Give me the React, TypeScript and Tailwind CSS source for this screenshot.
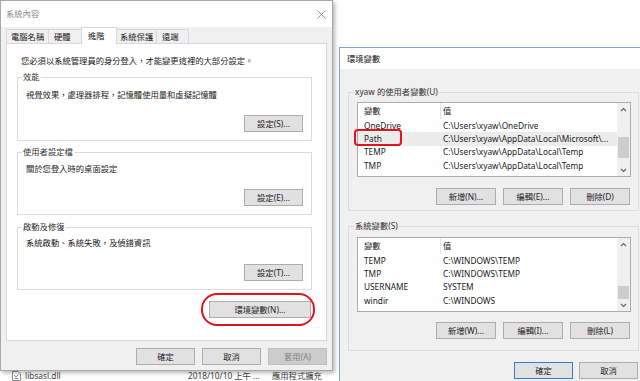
import React from "react";

function Btn({
  w,
  children,
  className = "",
}: {
  w: string;
  children: React.ReactNode;
  className?: string;
}) {
  return (
    <div
      className={`${w} h-[17px] shrink-0 flex items-center justify-center border border-[#adadad] bg-[#e1e1e1] text-[#222] ${className}`}
    >
      {children}
    </div>
  );
}

function ChevronUp() {
  return (
    <svg width="7" height="5" viewBox="0 0 7 5">
      <path d="M1 4 L3.5 1.5 L6 4" fill="none" stroke="#606060" strokeWidth="1.1" />
    </svg>
  );
}
function ChevronDown() {
  return (
    <svg width="7" height="5" viewBox="0 0 7 5">
      <path d="M1 1 L3.5 3.5 L6 1" fill="none" stroke="#606060" strokeWidth="1.1" />
    </svg>
  );
}

function SettingGroup({
  title,
  desc,
  btn,
  descMt,
  btnMt,
}: {
  title: string;
  desc: string;
  btn: string;
  descMt: string;
  btnMt: string;
}) {
  return (
    <fieldset className="border border-[#dcdcdc] flex flex-col pb-[8px]">
      <legend className="ml-[4px] px-[1px] leading-[12px] text-[#333]">{title}</legend>
      <div className={`ml-[8px] ${descMt} leading-[12px] text-[#222]`}>{desc}</div>
      <div className={`${btnMt} mr-[8px] self-end`}>
        <Btn w="w-[59px]">{btn}</Btn>
      </div>
    </fieldset>
  );
}

type Row = { name: string; value: string; hl?: boolean };

function VarList({
  rows,
  thumbTop,
  thumbH,
}: {
  rows: Row[];
  thumbTop: string;
  thumbH: string;
}) {
  return (
    <div className="w-[274px] h-[75px] border border-[#abadb3] bg-white flex overflow-hidden">
      <div className="w-[259px] flex flex-col">
        <div className="h-[16px] shrink-0 flex items-stretch">
          <div className="w-[83px] pl-[6px] flex items-center border-r border-[#e5e5e5]">變數</div>
          <div className="pl-[2px] flex items-center">值</div>
        </div>
        {rows.map((r) => (
          <div
            key={r.name}
            className={`h-[13.4px] shrink-0 flex items-center ${r.hl ? "bg-[#ececec]" : ""}`}
          >
            <div className="w-[83px] pl-[6px] whitespace-nowrap text-[#1a1a1a]">{r.name}</div>
            <div className="pl-[2px] whitespace-nowrap overflow-hidden text-[#1a1a1a]">{r.value}</div>
          </div>
        ))}
      </div>
      <div className="w-[13px] h-full bg-[#f0f0f0] flex flex-col items-center relative">
        <div className="h-[12px] flex items-center justify-center">
          <ChevronUp />
        </div>
        <div className={`absolute left-[1px] w-[11px] bg-[#cdcdcd] ${thumbTop} ${thumbH}`} />
        <div className="mt-auto h-[12px] flex items-center justify-center">
          <ChevronDown />
        </div>
      </div>
    </div>
  );
}

export default function App() {
  return (
    <div className="relative w-[640px] h-[381px] overflow-hidden bg-white text-[8.3px] leading-[12px] text-[#222] font-['Noto_Sans','Noto_Sans_CJK_TC',sans-serif]">
      {/* explorer row behind dialogs */}
      <div className="absolute left-0 top-[370px] h-[12px] w-[340px] flex items-center text-[#444]">
        <div className="ml-[12px] w-[9px] h-[10px] flex items-center justify-center">
          <svg width="9" height="10" viewBox="0 0 9 10">
            <path d="M0.5 0.5 H6 L8.5 3 V9.5 H0.5 Z" fill="#fff" stroke="#8a8a8a" />
            <path d="M2 4 L4 6 L6.5 3.5 M2.5 7.5 H6.5" fill="none" stroke="#7a7a7a" strokeWidth="0.9" />
          </svg>
        </div>
        <div className="ml-[4px] w-[163px]">libsasl.dll</div>
        <div className="w-[84px]">2018/10/10 上午 ...</div>
        <div>應用程式擴充</div>
      </div>

      {/* left dialog: 系統內容 */}
      <div className="absolute left-0 top-0 z-10 w-[333px] h-[371px] bg-[#f0f0f0] border border-[#a8a8a8] shadow-[2px_2px_4px_rgba(0,0,0,0.28)] flex flex-col">
        <div className="h-[26px] shrink-0 bg-white flex items-center justify-between pl-[5px] pr-[6px]">
          <span className="text-[#8c8c8c]">系統內容</span>
          <svg width="9" height="9" viewBox="0 0 9 9">
            <path d="M0.5 0.5 L8.5 8.5 M8.5 0.5 L0.5 8.5" stroke="#8a8a8a" strokeWidth="0.9" />
          </svg>
        </div>
        <div className="px-[5px] flex flex-col">
          <div className="h-[16px] flex items-end">
            <div className="w-[42px] h-[14px] border-t border-l border-[#d9d9d9] bg-[#f0f0f0] flex items-center pl-[4px]">電腦名稱</div>
            <div className="w-[33px] h-[14px] border-t border-l border-[#d9d9d9] bg-[#f0f0f0] flex items-center pl-[5px]">硬體</div>
            <div className="w-[36px] h-[17px] -mb-px relative z-10 border-t border-l border-r border-[#d9d9d9] bg-white flex items-center pl-[6px] pb-[1px]">進階</div>
            <div className="w-[40px] h-[14px] border-t border-r border-[#d9d9d9] bg-[#f0f0f0] flex items-center pl-[3px]">系統保護</div>
            <div className="w-[32px] h-[14px] border-t border-r border-[#d9d9d9] bg-[#f0f0f0] flex items-center pl-[5px]">遠端</div>
          </div>
          <div className="h-[298px] border border-[#d9d9d9] bg-white flex flex-col pt-[11px] pl-[10px] pr-[14px]">
            <div className="ml-[4px] leading-[12px]">您必須以系統管理員的身分登入，才能變更這裡的大部分設定。</div>
            <div className="mt-[4px]">
              <SettingGroup title="效能" desc="視覺效果，處理器排程，記憶體使用量和虛擬記憶體" btn="設定(S)..." descMt="mt-[6px]" btnMt="mt-[14px]" />
            </div>
            <div className="mt-[5px]">
              <SettingGroup title="使用者設定檔" desc="關於您登入時的桌面設定" btn="設定(E)..." descMt="mt-[5px]" btnMt="mt-[14px]" />
            </div>
            <div className="mt-[6px]">
              <SettingGroup title="啟動及修復" desc="系統啟動、系統失敗，及偵錯資訊" btn="設定(T)..." descMt="mt-[4px]" btnMt="mt-[15px]" />
            </div>
            <div className="mt-[11px] self-end mr-[1px] relative">
              <Btn w="w-[102px]">環境變數(N)...</Btn>
              <div className="absolute -left-[8px] -right-[4px] -top-[8px] -bottom-[8px] rounded-[16px] border-[2.5px] border-[#e3121b]" />
            </div>
          </div>
          <div className="mt-[7px] flex justify-end gap-[7px]">
            <Btn w="w-[59px]">確定</Btn>
            <Btn w="w-[59px]">取消</Btn>
            <Btn w="w-[59px]" className="!bg-[#cccccc] !border-[#bfbfbf] !text-[#838383]">套用(A)</Btn>
          </div>
        </div>
      </div>

      {/* right dialog: 環境變數 */}
      <div className="absolute left-[339px] top-[47px] z-20 w-[320px] h-[345px] bg-[#f0f0f0] border-l border-t border-[#7fa3d9] flex flex-col">
        <div className="h-[21px] shrink-0 bg-white flex items-center pl-[7px] text-[#111]">環境變數</div>
        <div className="flex flex-col pl-[8px]">
          <fieldset className="mt-[17px] w-[291px] border border-[#dcdcdc] flex flex-col pb-[5px]">
            <legend className="ml-[5px] px-[1px] leading-[12px] text-[#333]">xyaw 的使用者變數(U)</legend>
            <div className="relative ml-[8px] mt-[4px]">
              <VarList
                thumbTop="top-[34px]"
                thumbH="h-[21px]"
                rows={[
                  { name: "OneDrive", value: "C:\\Users\\xyaw\\OneDrive" },
                  { name: "Path", value: "C:\\Users\\xyaw\\AppData\\Local\\Microsoft\\...", hl: true },
                  { name: "TEMP", value: "C:\\Users\\xyaw\\AppData\\Local\\Temp" },
                  { name: "TMP", value: "C:\\Users\\xyaw\\AppData\\Local\\Temp" },
                  { name: "", value: "" },
                ]}
              />
              <div className="absolute -left-[3px] top-[27px] w-[48px] h-[17px] rounded-[4px] border-2 border-[#e3121b]" />
            </div>
            <div className="mt-[11px] mr-[8px] self-end flex gap-[7px]">
              <Btn w="w-[60px]">新增(N)...</Btn>
              <Btn w="w-[60px]">編輯(E)...</Btn>
              <Btn w="w-[60px]">刪除(D)</Btn>
            </div>
          </fieldset>
          <fieldset className="mt-[9px] w-[291px] border border-[#dcdcdc] flex flex-col pb-[11px]">
            <legend className="ml-[5px] px-[1px] leading-[12px] text-[#333]">系統變數(S)</legend>
            <div className="ml-[8px] mt-[5px]">
              <VarList
                thumbTop="top-[48px]"
                thumbH="h-[13px]"
                rows={[
                  { name: "TEMP", value: "C:\\WINDOWS\\TEMP" },
                  { name: "TMP", value: "C:\\WINDOWS\\TEMP" },
                  { name: "USERNAME", value: "SYSTEM" },
                  { name: "windir", value: "C:\\WINDOWS" },
                  { name: " ", value: "" },
                ]}
              />
            </div>
            <div className="mt-[10px] mr-[8px] self-end flex gap-[7px]">
              <Btn w="w-[60px]">新增(W)...</Btn>
              <Btn w="w-[60px]">編輯(I)...</Btn>
              <Btn w="w-[60px]">刪除(L)</Btn>
            </div>
          </fieldset>
          <div className="mt-[11px] ml-[166px] flex gap-[6px]">
            <Btn w="w-[59px]" className="!border-[#2a7fd6]">確定</Btn>
            <Btn w="w-[59px]">取消</Btn>
          </div>
        </div>
      </div>
    </div>
  );
}
